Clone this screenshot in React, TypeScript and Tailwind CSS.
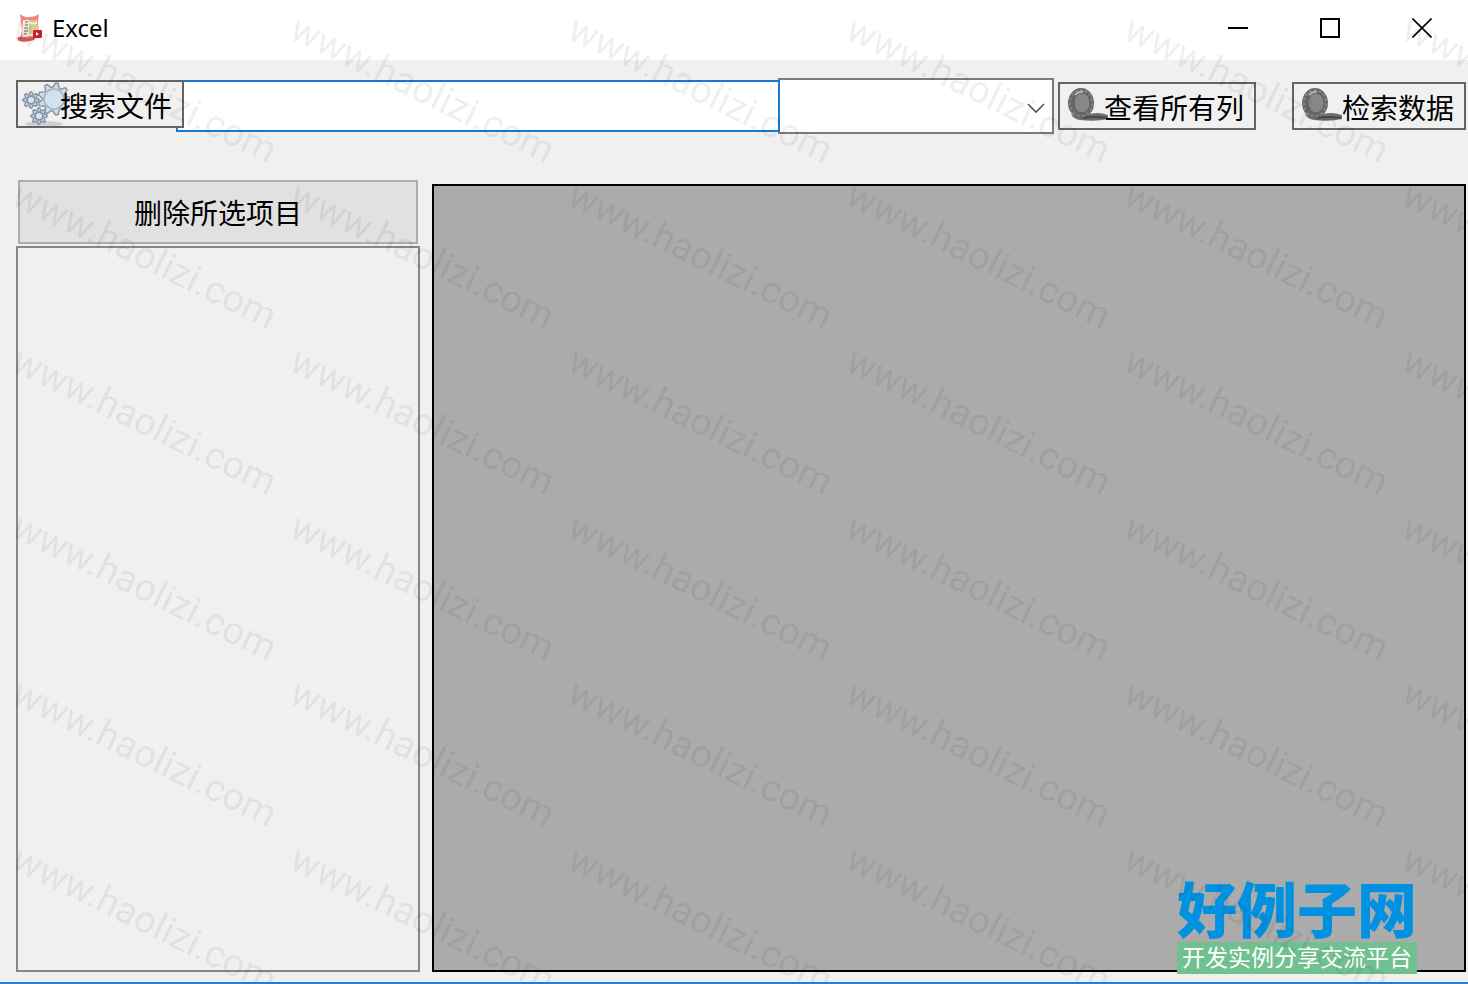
import type { ReactNode } from "react";

/* icons */

function AppIcon() {
    return (
        <svg className="w-7 h-8" viewBox="0 0 28 32" aria-hidden="true">
            <path d="M4 2 Q8 6 13 5 Q19 5 23 2 L22 10 L23 22 Q22 26 16 27 H4 Q5 22 6 18 Z" fill="#f08585" />
            <path d="M1 26 Q5 24 7 25 Q14 27 20 24 L18 28 Q9 31 3 29 Z" fill="#cf555a" />
            <path d="M7 8h14l1 15-16 2z" fill="#f3e9dc" />
            <path d="M9 10h3M9 13h3M8 16h4M8 19h4M8 22h3" stroke="#9b9090" strokeWidth="1.5" />
            <path d="M13 9h7" stroke="#e0c070" strokeWidth="2" />
            <rect x="13" y="12" width="8" height="10" fill="#d3d292" />
            <rect x="17" y="18" width="9" height="8" rx="1" fill="#cf1c2b" />
            <path d="M20 20v4l3-2z" fill="#fff" />
        </svg>
    );
}

function gearPath(cx: number, cy: number, r: number, depth: number, teeth: number) {
    const points: string[] = [];
    for (let i = 0; i < teeth * 4; i++) {
        const angle = ((i - 0.5) / (teeth * 4)) * Math.PI * 2;
        const radius = i % 4 < 2 ? r : r - depth;
        points.push(`${(cx + Math.cos(angle) * radius).toFixed(1)} ${(cy + Math.sin(angle) * radius).toFixed(1)}`);
    }
    return `M${points.join("L")}Z`;
}

function GearsIcon() {
    return (
        <svg className="w-12 h-11 shrink-0" viewBox="0 0 48 44" aria-hidden="true">
            <ellipse cx="22" cy="42" rx="19" ry="3" fill="#cfcfcf" />
            <g fill="#d5dce3" stroke="#8295a8" strokeLinejoin="round">
                <path d={gearPath(32, 17, 16, 4, 9)} strokeWidth="1.5" />
                <path d={gearPath(9, 18, 8, 2, 8)} strokeWidth="1.5" />
                <path d={gearPath(17, 34, 8, 2, 8)} strokeWidth="1.5" />
            </g>
            <circle cx="32" cy="17" r="10" fill="#d3e1ef" stroke="#9db1c6" strokeWidth="1.5" />
            <g fill="#d8e3ee" stroke="#7f98b2" strokeWidth="2">
                <circle cx="9" cy="18" r="4" />
                <circle cx="17" cy="34" r="4" />
            </g>
        </svg>
    );
}

function ReelIcon() {
    return (
        <svg className="w-11 h-10 shrink-0" viewBox="0 0 44 40" aria-hidden="true">
            <path d="M5 28 Q12 33 20 29 Q31 25 42 29 V33 Q30 36 14 34 Q7 33 5 28Z" fill="#6d6d6d" />
            <path d="M17 32 Q29 30 41 32" fill="none" stroke="#484848" strokeWidth="2" />
            <ellipse cx="15" cy="17" rx="13" ry="15" fill="#666" />
            <ellipse cx="15" cy="17" rx="11" ry="13" fill="none" stroke="#858585" strokeWidth="2" strokeDasharray="3 2" />
            <ellipse cx="16" cy="17" rx="8" ry="10" fill="#878787" stroke="#606060" />
            <path d="M9 9 Q13 5 17 6" fill="none" stroke="#b5b5b5" strokeWidth="2" />
        </svg>
    );
}

/* components */

interface ToolButtonProps {
    icon: ReactNode;
    label: string;
    className: string;
}

function ToolButton({ icon, label, className }: ToolButtonProps) {
    return (
        <button type="button" className={`flex items-center justify-between h-12 pr-2.5 border-2 border-[#646464] bg-[#f0f0f0] text-[28px] leading-none whitespace-nowrap shrink-0 ${className}`}>
            {icon}
            <span className="-ml-3 pt-0.5">{label}</span>
        </button>
    );
}

function Watermark() {
    return (
        <div className="absolute inset-0 overflow-hidden pointer-events-none z-30 select-none" aria-hidden="true">
            <div className="grid grid-cols-[repeat(6,278px)] auto-rows-[166px] pl-6 pt-2">
                {Array.from({ length: 36 }, (_, i) => (
                    <span key={i} className="origin-top-left rotate-[26deg] w-max font-[Roboto] text-[38px] leading-10 text-black/8">www.haolizi.com</span>
                ))}
            </div>
        </div>
    );
}

export default function App() {
    return (
        <div className="relative flex flex-col h-screen bg-[#f0f0f0] text-black border-b-2 border-[#1f80d4] overflow-hidden font-['Noto_Sans_CJK_SC',sans-serif]">
            <header className="flex items-center h-[60px] bg-white pl-4 pb-1 shrink-0">
                <AppIcon />
                <h1 className="ml-2 text-2xl font-['Noto_Sans',sans-serif]">Excel</h1>
                <div className="ml-auto flex h-full">
                    <button type="button" aria-label="最小化" className="w-[92px] flex items-center justify-center">
                        <svg className="w-5 h-5" viewBox="0 0 20 20"><path d="M0 10h20" stroke="#000" strokeWidth="2" /></svg>
                    </button>
                    <button type="button" aria-label="最大化" className="w-[92px] flex items-center justify-center">
                        <svg className="w-5 h-5" viewBox="0 0 20 20"><path d="M1 1h18v18H1z" fill="none" stroke="#000" strokeWidth="2" /></svg>
                    </button>
                    <button type="button" aria-label="关闭" className="w-[92px] flex items-center justify-center">
                        <svg className="w-5 h-5" viewBox="0 0 20 20"><path d="M.5.5l19 19M19.500.5L.5 19.500" stroke="#000" strokeWidth="1.6" /></svg>
                    </button>
                </div>
            </header>

            <section className="flex items-start h-[120px] pt-[18px] pl-4 pr-0.5 shrink-0">
                <ToolButton icon={<GearsIcon />} label="搜索文件" className="w-[168px] mt-0.5 pl-1 z-20" />
                <input type="text" aria-label="文件路径" className="flex-1 min-w-0 h-[52px] mt-0.5 -ml-2 px-3 text-2xl bg-white border-2 border-[#1979d2] outline-none z-10" />
                <div className="relative w-[276px] -ml-0.5 shrink-0">
                    <select aria-label="列" className="block w-full h-14 px-2 text-2xl appearance-none bg-white border-2 border-[#7a7a7a]"></select>
                    <svg className="absolute right-2 top-5 w-5 h-5 pointer-events-none" viewBox="0 0 20 20"><path d="M2 6l8 8 8-8" fill="none" stroke="#555" strokeWidth="1.6" /></svg>
                </div>
                <ToolButton icon={<ReelIcon />} label="查看所有列" className="w-[198px] mt-1 ml-1 pl-1.5" />
                <ToolButton icon={<ReelIcon />} label="检索数据" className="w-[174px] mt-1 ml-9 pl-1.5" />
            </section>

            <main className="flex flex-1 min-h-0 gap-3 pl-4 pr-0.5 pb-2.5">
                <aside className="flex flex-col w-[404px] gap-0.5 shrink-0">
                    <button type="button" className="h-16 mx-0.5 bg-[#e1e1e1] border-2 border-[#adadad] text-[28px] shrink-0">删除所选项目</button>
                    <div className="flex-1 border-2 border-[#828790]"></div>
                </aside>
                <div className="flex-1 mt-1 bg-[#ababab] border-2 border-black"></div>
            </main>

            <div className="absolute right-[51px] bottom-2 z-20 w-60 text-center whitespace-nowrap">
                <p className="h-16 text-[60px] leading-[58px] font-black text-[#0092e0]">好例子网</p>
                <p className="h-8 text-[23px] leading-7 text-white bg-[#70c090]">开发实例分享交流平台</p>
            </div>

            <Watermark />
        </div>
    );
}
